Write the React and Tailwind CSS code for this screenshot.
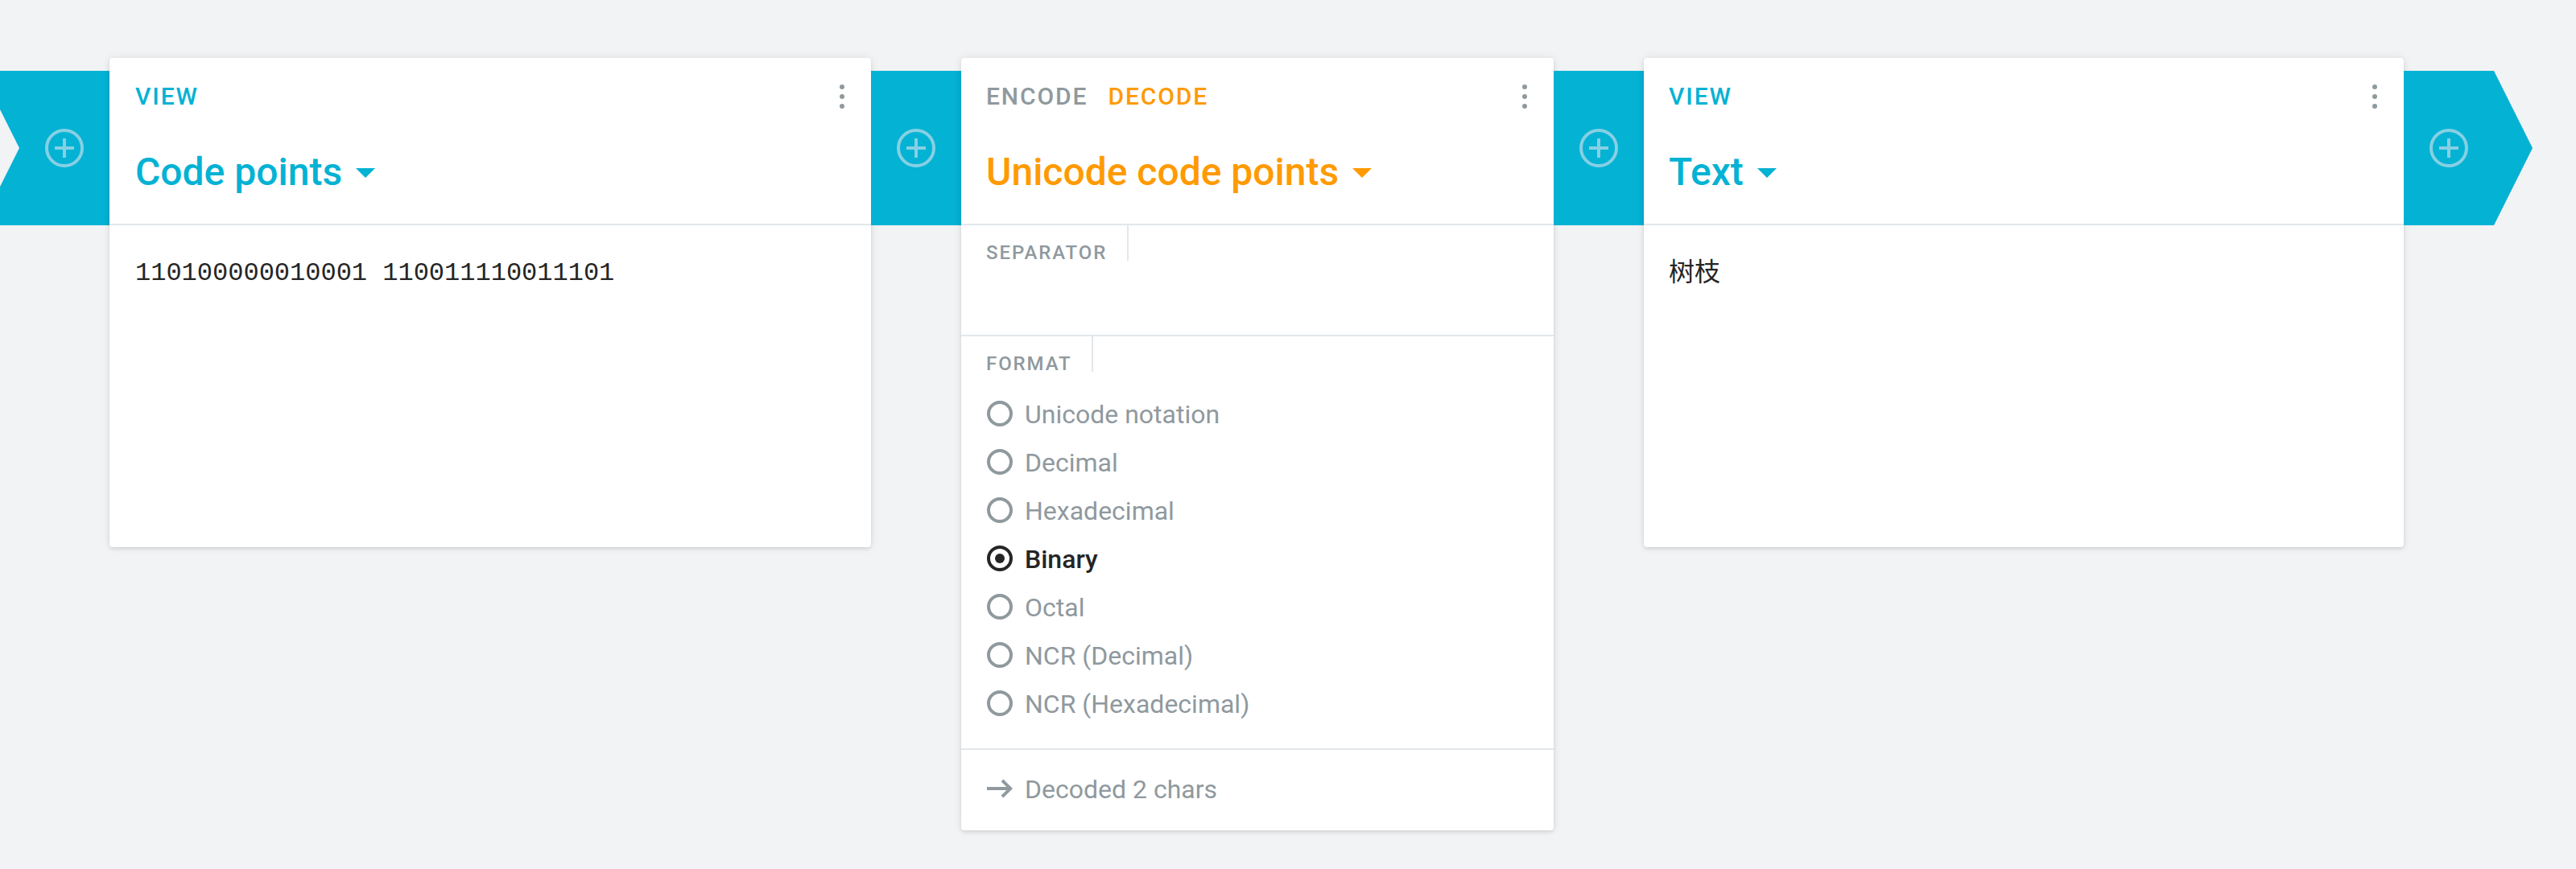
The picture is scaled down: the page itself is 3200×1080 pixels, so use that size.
function PlusIcon() {
  return (
    <svg className="size-12 shrink-0 text-[#86d0e4]" viewBox="0 0 48 48" fill="none" stroke="currentColor" strokeWidth="4">
      <circle cx="24" cy="24" r="22" />
      <path d="M12 24H36M24 12V36" />
    </svg>
  );
}

function DotsIcon() {
  return (
    <svg className="h-[30px] w-2 text-[#8f999e]" viewBox="0 0 8 30" fill="currentColor">
      <circle cx="4" cy="3" r="3" />
      <circle cx="4" cy="15" r="3" />
      <circle cx="4" cy="27" r="3" />
    </svg>
  );
}

function Connector() {
  return (
    <div className="mt-4 flex h-48 w-28 shrink-0 items-center justify-center bg-[#04b2d4]">
      <PlusIcon />
    </div>
  );
}

function Card({ size, inset, tabs, title, tone, children }) {
  return (
    <section className={`flex shrink-0 flex-col rounded bg-white shadow-[0_2px_4px_rgba(0,0,0,0.1),0_0_12px_rgba(0,0,0,0.08)] ${size}`}>
      <header className="flex h-[208px] flex-col border-b-2 border-[#e2e7ea]">
        <div className={`flex h-24 items-center justify-between pr-8 ${inset}`}>
          <div className="flex gap-[25px] text-[30px] leading-10 font-medium tracking-[1.9px]">{tabs}</div>
          <DotsIcon />
        </div>
        <div className={`mt-3.5 flex h-16 items-center gap-[17px] ${inset} ${tone}`}>
          <h2 className="text-[48px] leading-[64px] font-medium">{title}</h2>
          <svg className="mt-0.5 h-3 w-6" viewBox="0 0 24 12" fill="currentColor">
            <path d="M0 0H24L12 12Z" />
          </svg>
        </div>
      </header>
      {children}
    </section>
  );
}

function FieldLabel({ children }) {
  return (
    <div className="h-11 w-fit border-r-2 border-[#e2e7ea] pt-6 pr-[24.5px] pl-[31px] text-[24px] leading-5 font-medium tracking-[1.92px] text-[#8f999e]">
      {children}
    </div>
  );
}

function Option({ label, selected }) {
  return (
    <li className={`flex h-[60px] items-center gap-[15px] ${selected ? "font-medium text-[#252525]" : "text-[#8f999e]"}`}>
      <svg className="size-8" viewBox="0 0 32 32" fill="none" stroke="currentColor" strokeWidth="4">
        <circle cx="16" cy="16" r="14" />
        {selected && <circle cx="16" cy="16" r="6" fill="currentColor" stroke="none" />}
      </svg>
      <span className="pt-0.5 text-[32px] leading-10">{label}</span>
    </li>
  );
}

const FORMATS = ["Unicode notation", "Decimal", "Hexadecimal", "Binary", "Octal", "NCR (Decimal)", "NCR (Hexadecimal)"];

export default function App() {
  return (
    <main className="flex h-[1080px] w-[3200px] items-start overflow-hidden bg-[#f2f3f5] pt-[72px] font-['Roboto','Noto_Sans_CJK_SC',sans-serif]">
      <div className="mt-4 flex h-48 w-[136px] shrink-0 items-center bg-[#04b2d4]">
        <svg className="h-24 w-6 text-[#f2f3f5]" viewBox="0 0 24 96" fill="currentColor">
          <path d="M0 0L24 48L0 96Z" />
        </svg>
        <div className="ml-8">
          <PlusIcon />
        </div>
      </div>

      <Card size="w-[946px] h-[608px]" inset="pl-8" tone="text-[#04b2d4]" title="Code points" tabs={<span className="text-[#04b2d4]">VIEW</span>}>
        <p className="px-8 pt-9 font-['Liberation_Mono',monospace] text-[32px] leading-[48px] text-[#252525]">
          110100000010001 110011110011101
        </p>
      </Card>

      <Connector />

      <Card
        size="w-[736px] h-[960px]"
        inset="pl-[31px]"
        tone="text-[#ff9a00]"
        title="Unicode code points"
        tabs={
          <>
            <span className="text-[#8f999e]">ENCODE</span>
            <span className="text-[#ff9a00]">DECODE</span>
          </>
        }
      >
        <div className="h-[138px] border-b-2 border-[#e2e7ea]">
          <FieldLabel>SEPARATOR</FieldLabel>
        </div>
        <div className="h-[514px] border-b-2 border-[#e2e7ea]">
          <FieldLabel>FORMAT</FieldLabel>
          <ul className="mt-[22px] pl-8">
            {FORMATS.map((label) => (
              <Option key={label} label={label} selected={label === "Binary"} />
            ))}
          </ul>
        </div>
        <footer className="flex h-24 items-center gap-[15px] pl-8 text-[#8f999e]">
          <svg className="size-8" viewBox="0 0 32 32" fill="none" stroke="currentColor" strokeWidth="4">
            <path d="M0 16H29M19 5.8L29.2 16L19 26.2" />
          </svg>
          <span className="pt-0.5 text-[32px] leading-10">Decoded 2 chars</span>
        </footer>
      </Card>

      <Connector />

      <Card size="w-[944px] h-[608px]" inset="pl-[31px]" tone="text-[#04b2d4]" title="Text" tabs={<span className="text-[#04b2d4]">VIEW</span>}>
        <p className="px-[31px] pt-[34px] text-[32px] leading-[48px] text-[#252525]" lang="zh-CN">
          树枝
        </p>
      </Card>

      <div className="mt-4 flex h-48 w-40 shrink-0 items-center bg-[#04b2d4] pl-8 [clip-path:polygon(0_0,112px_0,160px_96px,112px_192px,0_192px)]">
        <PlusIcon />
      </div>
    </main>
  );
}
